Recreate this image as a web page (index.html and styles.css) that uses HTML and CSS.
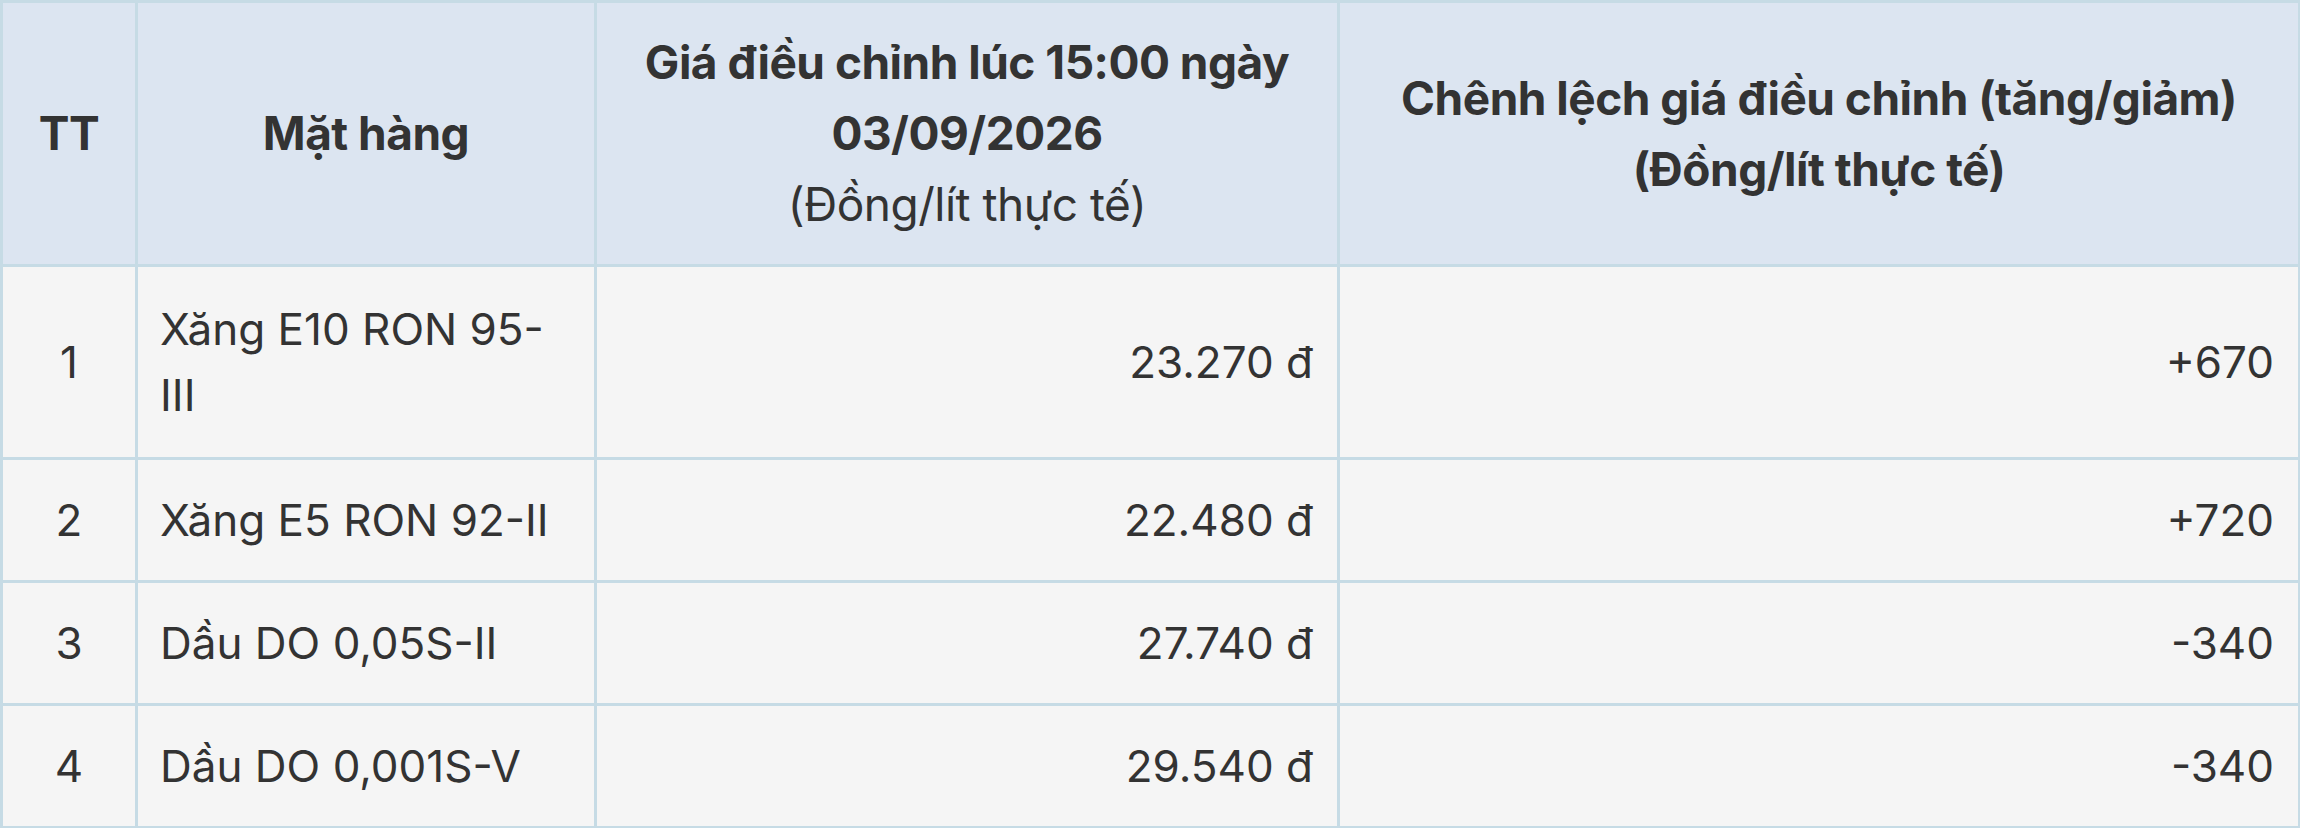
FILE: index.html
```html
<!DOCTYPE html>
<html lang="vi">
<head>
<meta charset="utf-8">
<title>Giá xăng dầu</title>
<link rel="stylesheet" href="styles.css">
</head>
<body>
<table class="price-table">
  <colgroup>
    <col class="c-tt">
    <col class="c-item">
    <col class="c-price">
    <col class="c-diff">
  </colgroup>
  <thead>
    <tr>
      <th>TT</th>
      <th>Mặt hàng</th>
      <th>Giá điều chỉnh lúc 15:00 ngày 03/09/2026<br><span class="unit">(Đồng/lít thực tế)</span></th>
      <th>Chênh lệch giá điều chỉnh (tăng/giảm)<br>(Đồng/lít thực tế)</th>
    </tr>
  </thead>
  <tbody>
    <tr class="row-tall">
      <td class="num">1</td>
      <td class="item">Xăng E10 RON 95-III</td>
      <td class="right">23.270 đ</td>
      <td class="right">+670</td>
    </tr>
    <tr>
      <td class="num">2</td>
      <td class="item">Xăng E5 RON 92-II</td>
      <td class="right">22.480 đ</td>
      <td class="right">+720</td>
    </tr>
    <tr>
      <td class="num">3</td>
      <td class="item">Dầu DO 0,05S-II</td>
      <td class="right">27.740 đ</td>
      <td class="right">-340</td>
    </tr>
    <tr>
      <td class="num">4</td>
      <td class="item">Dầu DO 0,001S-V</td>
      <td class="right">29.540 đ</td>
      <td class="right">-340</td>
    </tr>
  </tbody>
</table>
</body>
</html>
```

FILE: styles.css
```css
html, body {
  margin: 0;
  padding: 0;
  background: #ffffff;
}

body {
  font-family: Inter, "Noto Sans", "Liberation Sans", sans-serif;
  color: #333333;
}

.price-table {
  width: 2298px;
  border-collapse: collapse;
  table-layout: fixed;
  font-size: 44px;
  line-height: 66px;
}

.c-tt { width: 135px; }
.c-item { width: 459px; }
.c-price { width: 743px; }
.c-diff { width: 961px; }

.price-table th,
.price-table td {
  border: 3px solid #c6dbe5;
  padding: 27px 22px 27px 22px;
  vertical-align: middle;
}

.price-table th {
  background: #dce5f1;
  font-weight: 700;
  font-size: 46px;
  line-height: 71px;
  text-align: center;
  height: 213px;
  padding: 24px 22px;
  letter-spacing: -0.5px;
}

.price-table th .unit {
  font-weight: 400;
}

.price-table td {
  background: #f5f5f5;
  height: 66px;
}

.price-table td.right {
  padding-right: 24px;
}

.price-table .row-tall td {
  padding-top: 29px;
  padding-bottom: 29px;
}

.price-table td.num {
  text-align: center;
}

.price-table td.item {
  text-align: left;
}

.price-table td.right {
  text-align: right;
}
```
